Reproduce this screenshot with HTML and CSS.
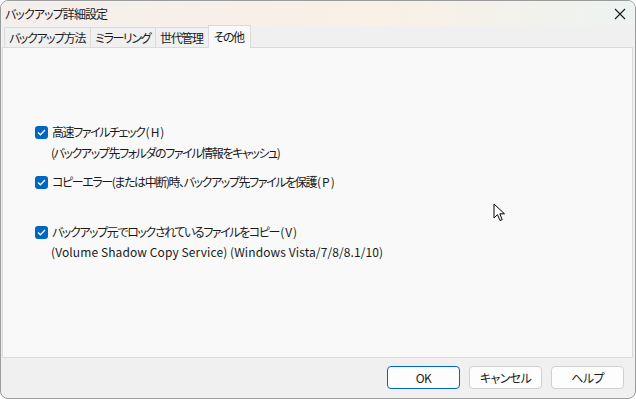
FILE: index.html
```html
<!DOCTYPE html>
<html lang="ja">
<head>
  <meta charset="UTF-8" />
  <title>バックアップ詳細設定</title>
  <link rel="stylesheet" href="styles.css">
</head>
<body>

<div class="window">
  <div class="titlebar">
    <span class="title">バックアップ詳細設定</span>
    <span class="close">
      <svg width="12" height="12" viewBox="0 0 12 12"><path d="M1 1 L11 11 M11 1 L1 11" stroke="#1a1a1a" stroke-width="1.1" fill="none"/></svg>
    </span>
  </div>

  <div class="tabs">
    <div class="tab">バックアップ方法</div>
    <div class="tab">ミラーリング</div>
    <div class="tab">世代管理</div>
    <div class="tab active">その他</div>
  </div>

  <div class="panel">
    <div class="option">
      <label class="check-row"><span class="checkbox"><svg width="9" height="7" viewBox="0 0 9 7"><path d="M1 3.5 L3.4 5.8 L8 1" stroke="#fff" stroke-width="1.3" fill="none"/></svg></span>高速ファイルチェック<span class="key">(H)</span></label>
      <div class="note">(バックアップ先フォルダのファイル情報をキャッシュ)</div>
    </div>

    <div class="option">
      <label class="check-row"><span class="checkbox"><svg width="9" height="7" viewBox="0 0 9 7"><path d="M1 3.5 L3.4 5.8 L8 1" stroke="#fff" stroke-width="1.3" fill="none"/></svg></span>コピーエラー(または中断)時、バックアップ先ファイルを保護<span class="key">(P)</span></label>
    </div>

    <div class="option spaced">
      <label class="check-row"><span class="checkbox"><svg width="9" height="7" viewBox="0 0 9 7"><path d="M1 3.5 L3.4 5.8 L8 1" stroke="#fff" stroke-width="1.3" fill="none"/></svg></span>バックアップ元でロックされているファイルをコピー<span class="key">(V)</span></label>
      <div class="note latin">(Volume Shadow Copy Service) (Windows Vista/7/8/8.1/10)</div>
    </div>
  </div>

  <div class="footer">
    <button class="btn default">OK</button>
    <button class="btn">キャンセル</button>
    <button class="btn">ヘルプ</button>
  </div>

  <svg class="cursor" width="14" height="20" viewBox="0 0 14 20"><path d="M1 1 L1 15 L4.5 11.6 L7 17.5 L9.2 16.6 L6.8 10.8 L11.5 10.8 Z" fill="#fff" stroke="#000" stroke-width="1"/></svg>
</div>

</body>
</html>
```

FILE: styles.css
```css
* {
  margin: 0;
  padding: 0;
  box-sizing: border-box;
}

body {
  font-family: "Noto Sans CJK JP", "Noto Sans", sans-serif;
  font-size: 12px;
  font-feature-settings: "palt";
  letter-spacing: -1.4px;
  color: #1a1a1a;
  background: #ffffff;
}

.window {
  position: relative;
  width: 636px;
  height: 399px;
  border: 1px solid #9c9c9c;
  border-radius: 8px;
  background: #f0f0f0;
  overflow: hidden;
  display: flex;
  flex-direction: column;
}

.titlebar {
  height: 25px;
  display: flex;
  align-items: center;
  justify-content: space-between;
  padding: 0 9px 0 4px;
  background: linear-gradient(to right, #f4efed, #f9f0e6 60%, #edf3f1);
}

.title {
  font-size: 12px;
  line-height: 16px;
  letter-spacing: -0.9px;
}

.close {
  display: flex;
  width: 12px;
  height: 12px;
}

.tabs {
  display: flex;
  align-items: flex-end;
  height: 21px;
  padding-left: 3px;
}

.tab {
  height: 20px;
  padding: 0 5px 0 4px;
  line-height: 19px;
  border: 1px solid #dadada;
  border-bottom: none;
  margin-right: -1px;
  background: #f0f0f0;
}

.tab.active {
  height: 23px;
  margin-bottom: -1px;
  background: #f9f9f9;
  position: relative;
  z-index: 1;
  padding: 0 6px 0 5px;
  line-height: 21px;
}

.panel {
  height: 311px;
  margin: 0 2px 0 1px;
  background: #f9f9f9;
  border: 1px solid #dadada;
  padding: 76px 0 0 32px;
}

.option {
  margin-bottom: 13px;
}

.option.spaced {
  margin-top: 34px;
}

.check-row {
  display: flex;
  align-items: center;
  height: 16px;
  line-height: 16px;
}

.key {
  letter-spacing: 1px;
  margin-left: 1px;
}

.checkbox {
  display: flex;
  align-items: center;
  justify-content: center;
  width: 13px;
  height: 13px;
  margin-right: 4px;
  background: #0067c0;
  border-radius: 3px;
}

.note {
  margin: 5px 0 0 16px;
  line-height: 16px;
}

.note.latin {
  margin-top: 4px;
  letter-spacing: 0.1px;
}

.footer {
  flex: 1;
  display: flex;
  justify-content: flex-end;
  align-items: flex-start;
  gap: 9px;
  padding: 8px 11px 0 0;
}

.btn {
  width: 73px;
  height: 23px;
  font-family: inherit;
  font-size: 12px;
  font-feature-settings: "palt";
  letter-spacing: -0.6px;
  color: #1a1a1a;
  background: #fdfdfd;
  border: 1px solid #d0d0d0;
  border-radius: 4px;
}

.btn.default {
  border: 1px solid #0067c0;
}

.cursor {
  position: absolute;
  left: 492px;
  top: 202px;
}
```
